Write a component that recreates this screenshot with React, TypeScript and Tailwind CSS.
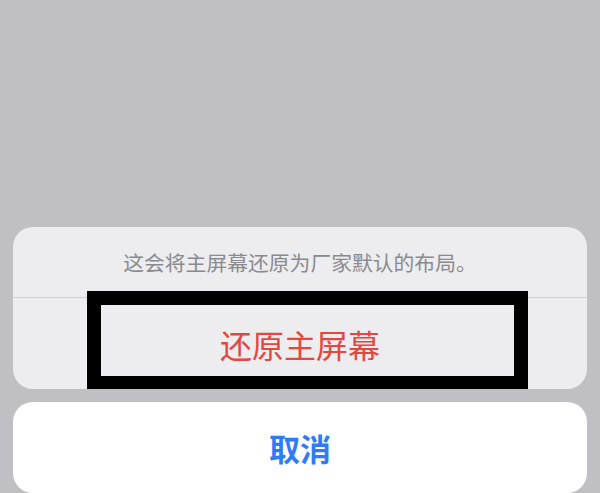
export default function App() {
  const font = { fontFamily: '"Noto Sans CJK SC", "Noto Sans", sans-serif' };
  return (
    <div className="w-[600px] h-[493px] bg-[#c0bfc4] flex flex-col justify-end px-[13px] gap-[13px] overflow-hidden" style={font}>
      <div className="relative bg-[#ededf0] rounded-[20px] flex flex-col overflow-hidden">
        <div className="h-[70px] flex items-center justify-center text-[20.8px] text-[#8a8a8e] leading-none">
          这会将主屏幕还原为厂家默认的布局。
        </div>
        <div className="h-px bg-[#d0d0d4]" />
        <div className="h-[91px] flex items-center justify-center text-[32px] text-[#e5473d] leading-none">
          还原主屏幕
        </div>
        <div className="absolute left-[74px] bottom-0 w-[441px] h-[98px] border-[14px] border-b-[13px] border-black" />
      </div>
      <div className="h-[91px] bg-white rounded-[20px] flex items-center justify-center text-[31px] font-semibold text-[#2f7bf5] leading-none">
        取消
      </div>
    </div>
  );
}
